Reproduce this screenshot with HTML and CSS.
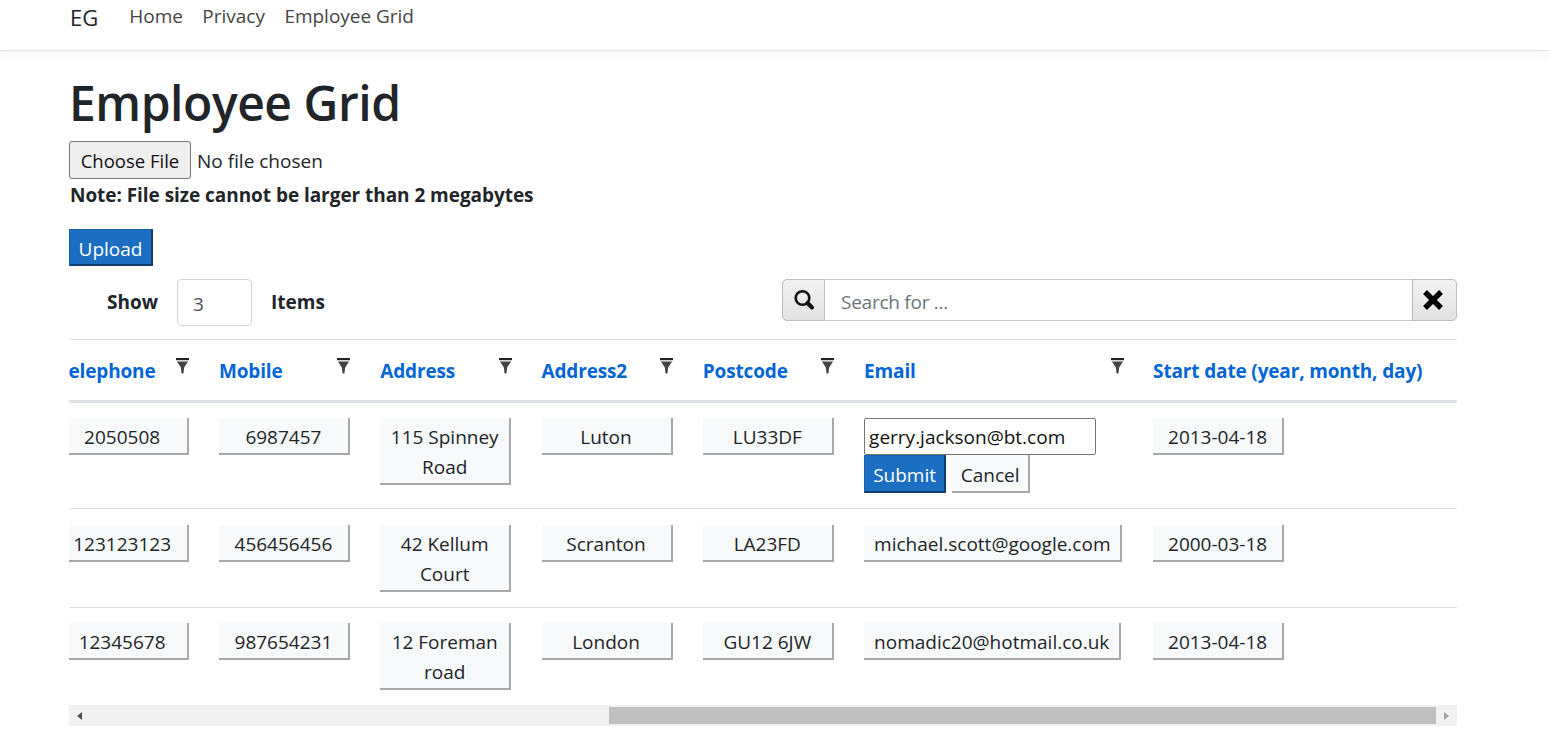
FILE: index.html
```html
<!DOCTYPE html>
<html lang="en">
<head>
<meta charset="utf-8">
<title>Employee Grid</title>
<link rel="stylesheet" href="styles.css">
</head>
<body>
<header class="navbar">
  <span class="brand">EG</span>
  <nav class="nav-links"><a>Home</a><a>Privacy</a><a>Employee Grid</a></nav>
</header>
<main class="content">
  <h1 class="title">Employee Grid</h1>
  <input class="file" type="file">
  <p class="note">Note: File size cannot be larger than 2 megabytes</p>
  <button class="btn-primary upload">Upload</button>
  <div class="toolbar">
    <div class="pager">
      <label class="strong">Show</label>
      <input class="page-size" value="3">
      <span class="strong">Items</span>
    </div>
    <div class="search">
      <span class="addon addon-left">
        <svg width="22" height="22" viewBox="0 0 22 22"><circle cx="9.5" cy="9" r="6.8" fill="none" stroke="#111" stroke-width="2.6"/><path d="M14.5 14l4.5 4.5" stroke="#111" stroke-width="4" stroke-linecap="round"/></svg>
      </span>
      <input class="search-input" placeholder="Search for ...">
      <span class="addon addon-right">
        <svg class="x-icon" width="24" height="24" viewBox="0 0 24 24"><path d="M4 4l16 16M20 4L4 20" stroke="#000" stroke-width="5.4"/></svg>
      </span>
    </div>
  </div>
  <div class="grid-view">
    <table class="grid">
      <colgroup>
        <col class="c-tel"><col class="c-std"><col class="c-std"><col class="c-std"><col class="c-std"><col class="c-email"><col class="c-date">
      </colgroup>
      <thead>
        <tr>
          <th><a>Telephone</a><svg class="funnel" width="13" height="16" viewBox="0 0 14 16" preserveAspectRatio="none"><path d="M0 0h14v2.2H0z" fill="#222"/><path d="M1 3.6h12L8.8 9.5 8 15.6H6L5.2 9.5z" fill="#444"/></svg></th>
          <th><a>Mobile</a><svg class="funnel" width="13" height="16" viewBox="0 0 14 16" preserveAspectRatio="none"><path d="M0 0h14v2.2H0z" fill="#222"/><path d="M1 3.6h12L8.8 9.5 8 15.6H6L5.2 9.5z" fill="#444"/></svg></th>
          <th><a>Address</a><svg class="funnel" width="13" height="16" viewBox="0 0 14 16" preserveAspectRatio="none"><path d="M0 0h14v2.2H0z" fill="#222"/><path d="M1 3.6h12L8.8 9.5 8 15.6H6L5.2 9.5z" fill="#444"/></svg></th>
          <th><a>Address2</a><svg class="funnel" width="13" height="16" viewBox="0 0 14 16" preserveAspectRatio="none"><path d="M0 0h14v2.2H0z" fill="#222"/><path d="M1 3.6h12L8.8 9.5 8 15.6H6L5.2 9.5z" fill="#444"/></svg></th>
          <th><a>Postcode</a><svg class="funnel" width="13" height="16" viewBox="0 0 14 16" preserveAspectRatio="none"><path d="M0 0h14v2.2H0z" fill="#222"/><path d="M1 3.6h12L8.8 9.5 8 15.6H6L5.2 9.5z" fill="#444"/></svg></th>
          <th class="th-email"><a>Email</a><svg class="funnel" width="13" height="16" viewBox="0 0 14 16" preserveAspectRatio="none"><path d="M0 0h14v2.2H0z" fill="#222"/><path d="M1 3.6h12L8.8 9.5 8 15.6H6L5.2 9.5z" fill="#444"/></svg></th>
          <th class="th-date"><a>Start date (year, month, day)</a></th>
        </tr>
      </thead>
      <tbody>
        <tr>
          <td><button class="cell">2050508</button></td>
          <td><button class="cell">6987457</button></td>
          <td><button class="cell">115 Spinney Road</button></td>
          <td><button class="cell">Luton</button></td>
          <td><button class="cell">LU33DF</button></td>
          <td class="td-edit">
            <input class="edit" value="gerry.jackson@bt.com">
            <div class="edit-actions"><button class="btn-primary submit">Submit</button><button class="cell cancel">Cancel</button></div>
          </td>
          <td><button class="cell">2013-04-18</button></td>
        </tr>
        <tr class="row-two">
          <td><button class="cell">123123123</button></td>
          <td><button class="cell">456456456</button></td>
          <td><button class="cell">42 Kellum Court</button></td>
          <td><button class="cell">Scranton</button></td>
          <td><button class="cell">LA23FD</button></td>
          <td><button class="cell cell-auto">michael.scott@google.com</button></td>
          <td><button class="cell">2000-03-18</button></td>
        </tr>
        <tr>
          <td><button class="cell">12345678</button></td>
          <td><button class="cell">987654231</button></td>
          <td><button class="cell">12 Foreman road</button></td>
          <td><button class="cell">London</button></td>
          <td><button class="cell">GU12 6JW</button></td>
          <td><button class="cell cell-auto">nomadic20@hotmail.co.uk</button></td>
          <td><button class="cell">2013-04-18</button></td>
        </tr>
      </tbody>
    </table>
  </div>
  <div class="scrollbar">
    <span class="arrow arrow-left"></span>
    <span class="track"><span class="thumb"></span></span>
    <span class="arrow arrow-right"></span>
  </div>
</main>
</body>
</html>
```
FILE: styles.css
```css
* { box-sizing: border-box; }
html, body { margin: 0; height: 756px; overflow: hidden; background: #fff; }
body { font-family: "Open Sans", "Noto Sans", sans-serif; font-size: 19px; color: #212529; }
button, input { font: inherit; }

.navbar { height: 51px; padding: 0 70px; display: flex; align-items: flex-start; border-bottom: 1px solid #e5e5ea; box-shadow: 0 4px 12px rgba(0,0,0,.04); }
.brand { font-size: 22px; line-height: 34px; margin-right: 31px; color: #212529; }
.nav-links { display: flex; gap: 19.5px; line-height: 32px; color: #454545; letter-spacing: -0.02px; }

.content { padding: 0 92px 0 69px; }
.title { margin: 21px 0 7px; font-size: 48px; line-height: 62px; font-weight: 600; letter-spacing: -0.45px; color: #212529; }
.file { display: block; height: 38px; color: #212529; }
.file::file-selector-button { height: 38px; width: 122px; margin-right: 6px; padding: 0; font-family: inherit; font-size: 18.5px; background: #efefef; border: 1px solid #767676; border-radius: 3px; color: #111; }
.note { margin: 3px 0 20px 1px; line-height: 27px; font-weight: 700; letter-spacing: -0.05px; color: #212529; }

.btn-primary { background: #1b6ec2; color: #fff; border: 1px solid #1861ac; border-right: 2px solid #0f3f70; border-bottom: 2px solid #0f3f70; line-height: 30px; padding: 3px 0 0; display: block; text-align: center; }
.upload { width: 84px; height: 37px; }

.toolbar { display: flex; justify-content: space-between; align-items: flex-start; margin-top: 13px; height: 60px; }
.pager { display: flex; align-items: center; height: 47px; padding-left: 38px; }
.strong { font-weight: 700; margin-top: -2px; color: #212529; }
.page-size { width: 75px; height: 47px; margin: 0 19px; padding: 2px 15px 0; border: 1px solid #ced4da; border-radius: 5px; color: #495057; }
.search { display: flex; width: 675px; height: 42px; }
.addon { width: 43px; display: flex; align-items: center; justify-content: center; background: linear-gradient(#f2f2f2, #e2e2e2); border: 1px solid #bdbdbd; }
.addon-left { border-radius: 5px 0 0 5px; }
.addon-right { border-radius: 0 5px 5px 0; width: 45px; }
.x-icon { margin-right: 3px; }
.search-input { flex: 1; min-width: 0; border: 1px solid #c8c8c8; border-width: 1px 0; padding: 3px 16px 0; letter-spacing: -0.25px; outline: 0; }
.search-input::placeholder { color: #6c757d; opacity: 1; }

.grid-view { overflow: hidden; width: 1388px; height: 366px; }
.grid { border-collapse: collapse; table-layout: fixed; width: 1411px; margin-left: -23.4px; }
.c-tel, .c-std { width: 161.3px; }
.c-email { width: 289px; }
.c-date { width: 316px; }
th { height: 62px; padding: 2px 12px 0; text-align: left; vertical-align: middle; position: relative; border-top: 1px solid #dee2e6; border-bottom: 3px solid #dee2e6; font-weight: 700; letter-spacing: -0.15px; }
th a { color: #0366d6; }
.funnel { position: absolute; top: 18px; left: 130.5px; }
.th-email .funnel { left: 258.5px; }
.th-date { white-space: nowrap; }
td { padding: 15px 12px 15px; vertical-align: top; border-top: 1px solid #dee2e6; }
tbody tr:first-child td { border-top: 0; }
.row-two td { padding-top: 16px; }
.cell { display: block; width: 131px; background: #f8f9fa; color: #212529; border: 0; border-right: 2px solid #a9a9a9; border-bottom: 2px solid #a9a9a9; padding: 4px 5px 1px; line-height: 30px; text-align: center; }
.cell-auto { width: auto; padding-inline: 10px; white-space: nowrap; }
.edit { display: block; width: 232px; height: 37px; padding: 0 4px; border: 1px solid #767676; border-radius: 2px; color: #111; }
.edit-actions { display: flex; gap: 6px; align-items: flex-start; }
.submit { width: 82px; height: 38px; }
.cancel { width: 78px; height: 38px; padding: 4px 0 1px; }

.scrollbar { display: flex; align-items: stretch; width: 1388px; height: 21px; background: #f1f1f1; }
.arrow { width: 21px; display: flex; align-items: center; justify-content: center; }
.arrow::before { content: ""; border: 4px solid transparent; }
.arrow-left::before { border-left: 0; border-right: 5px solid #505050; }
.arrow-right::before { border-right: 0; border-left: 5px solid #a3a3a3; }
.track { flex: 1; padding: 2px 0 2px 519px; display: flex; }
.thumb { flex: 1; background: #c0c0c0; }
```
